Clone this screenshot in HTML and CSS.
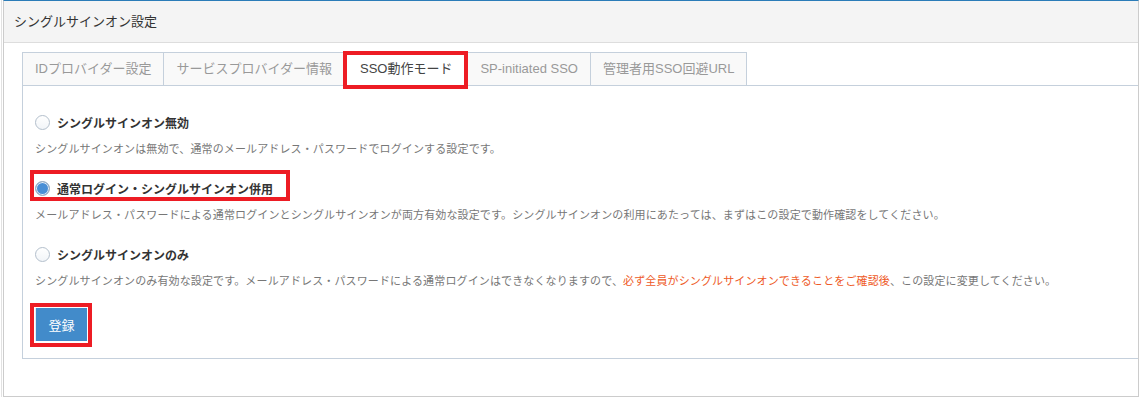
FILE: index.html
```html
<!DOCTYPE html>
<html lang="ja">
    <head>
        <meta charset="UTF-8">
        <meta name="viewport" content="width=device-width, initial-scale=1.0">
        <title>シングルサインオン設定</title>
        <link rel="stylesheet" href="styles.css">
    </head>
    <body>
        <div class="frame">
            <div class="widget">
                <div class="widget-header">シングルサインオン設定</div>
                <div class="widget-body">
                    <ul class="tabs">
                        <li class="tab">IDプロバイダー設定</li>
                        <li class="tab">サービスプロバイダー情報</li>
                        <li class="tab active mark mark-tab">SSO動作モード</li>
                        <li class="tab">SP-initiated SSO</li>
                        <li class="tab">管理者用SSO回避URL</li>
                    </ul>
                    <div class="tab-panel">
                        <div class="option">
                            <label class="radio">
                                <input type="radio" name="sso_mode" value="0">
                                <span>シングルサインオン無効</span>
                            </label>
                            <p class="help">シングルサインオンは無効で、通常のメールアドレス・パスワードでログインする設定です。</p>
                        </div>
                        <div class="option">
                            <label class="radio mark mark-radio">
                                <input type="radio" name="sso_mode" value="1" checked>
                                <span>通常ログイン・シングルサインオン併用</span>
                            </label>
                            <p class="help">メールアドレス・パスワードによる通常ログインとシングルサインオンが両方有効な設定です。シングルサインオンの利用にあたっては、まずはこの設定で動作確認をしてください。</p>
                        </div>
                        <div class="option">
                            <label class="radio">
                                <input type="radio" name="sso_mode" value="2">
                                <span>シングルサインオンのみ</span>
                            </label>
                            <p class="help">シングルサインオンのみ有効な設定です。メールアドレス・パスワードによる通常ログインはできなくなりますので、<span class="warn">必ず全員がシングルサインオンできることをご確認後</span>、この設定に変更してください。</p>
                        </div>
                        <button class="btn mark mark-btn">登録</button>
                    </div>
                </div>
            </div>
        </div>
    </body>
</html>
```

FILE: styles.css
```css
body {
    margin: 0;
    font-family: "Liberation Sans", "Noto Sans CJK JP", sans-serif;
    background-color: #fff;
    color: #333;
}

.frame {
    margin-left: 1px;
    border-left: 1px solid #e2e2e2;
}

.widget {
    margin: 0 1px 0 1px;
    border: 1px solid #ccc;
    border-top-color: #2b7cb8;
}

.widget-header {
    height: 41px;
    line-height: 41px;
    padding-left: 10px;
    font-size: 13px;
    background-color: #f4f4f4;
    border-bottom: 1px solid #ddd;
    color: #333;
}

.widget-body {
    padding: 9px 0 37px 18px;
}

/* tabs */
.tabs {
    list-style: none;
    margin: 0 0 -1px 0;
    padding: 0;
    display: flex;
}

.tab {
    line-height: 32px;
    padding: 0 12px;
    font-size: 13px;
    color: #999;
    background-color: #f9f9f9;
    border: 1px solid #c5d0dc;
    margin-right: -1px;
}

.tab.active {
    padding: 0 15px;
    color: #444;
    background-color: #fff;
    border-bottom-color: #fff;
    position: relative;
    z-index: 1;
}

.tab-panel {
    border: 1px solid #c5d0dc;
    border-right: none;
    padding: 26px 12px 17px 12px;
}

/* options */
.option {
    margin-bottom: 19px;
}

.option:last-of-type {
    margin-bottom: 0;
}

.radio {
    display: flex;
    width: fit-content;
    align-items: center;
    gap: 7px;
    height: 20px;
    font-size: 12px;
    font-weight: bold;
    color: #333;
}

.radio input {
    appearance: none;
    -webkit-appearance: none;
    width: 15px;
    height: 15px;
    margin: 0;
    border: 1px solid #b3bfcc;
    border-radius: 50%;
    background: linear-gradient(#fff, #f2f5f8);
}

.radio input:checked {
    border-color: #9fadbd;
    background: #4a8fd5;
    box-shadow: inset 0 0 0 1px #e9eff6;
}

.help {
    margin: 7px 0 0 0;
    line-height: 20px;
    font-size: 11px;
    letter-spacing: 0.13px;
    color: #777;
}

.warn {
    color: #ee5a26;
}

.btn {
    display: block;
    margin-top: 17px;
    width: 52px;
    height: 33px;
    padding: 0;
    font-family: inherit;
    font-size: 13px;
    color: #fff;
    background-color: #428bca;
    border: none;
    border-left: 1px solid #e3edf7;
    cursor: pointer;
}

/* red highlight boxes */
.mark {
    position: relative;
}

.mark::after {
    content: "";
    position: absolute;
    border: 4px solid #ed1c24;
    pointer-events: none;
}

.mark-tab::after {
    top: -2px;
    left: -2px;
    right: -1px;
    bottom: -4px;
}

.mark-radio::after {
    top: -8px;
    left: -5px;
    right: -17px;
    bottom: -3px;
}

.mark-btn::after {
    top: -5px;
    left: -6px;
    right: -5px;
    bottom: -6px;
}
```
